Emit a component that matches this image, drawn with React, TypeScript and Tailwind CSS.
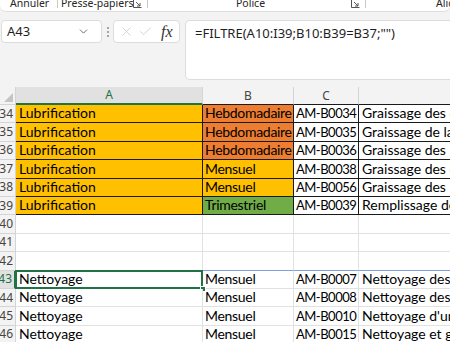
import { ChevronDown, X, Check } from "lucide-react";

type Row = {
  n: number;
  a: string;
  b: string;
  c: string;
  d: string;
  bBg?: string;
  boxed?: boolean;
};

const rows: Row[] = [
  { n: 34, a: "Lubrification", b: "Hebdomadaire", c: "AM-B0034", d: "Graissage des douilles", bBg: "bg-[#ed7d31]", boxed: true },
  { n: 35, a: "Lubrification", b: "Hebdomadaire", c: "AM-B0035", d: "Graissage de la chaîne", bBg: "bg-[#ed7d31]", boxed: true },
  { n: 36, a: "Lubrification", b: "Hebdomadaire", c: "AM-B0036", d: "Graissage des moteurs", bBg: "bg-[#ed7d31]", boxed: true },
  { n: 37, a: "Lubrification", b: "Mensuel", c: "AM-B0038", d: "Graissage des engrenages", bBg: "bg-[#ffc000]", boxed: true },
  { n: 38, a: "Lubrification", b: "Mensuel", c: "AM-B0056", d: "Graissage des paliers", bBg: "bg-[#ffc000]", boxed: true },
  { n: 39, a: "Lubrification", b: "Trimestriel", c: "AM-B0039", d: "Remplissage de l'huile", bBg: "bg-[#70ad47]", boxed: true },
  { n: 40, a: "", b: "", c: "", d: "" },
  { n: 41, a: "", b: "", c: "", d: "" },
  { n: 42, a: "", b: "", c: "", d: "" },
  { n: 43, a: "Nettoyage", b: "Mensuel", c: "AM-B0007", d: "Nettoyage des capteurs" },
  { n: 44, a: "Nettoyage", b: "Mensuel", c: "AM-B0008", d: "Nettoyage des filtres" },
  { n: 45, a: "Nettoyage", b: "Mensuel", c: "AM-B0010", d: "Nettoyage d'une pompe" },
  { n: 46, a: "Nettoyage", b: "Mensuel", c: "AM-B0015", d: "Nettoyage et graissage" },
];

const cellFont = { fontFamily: "Lato, 'Open Sans', sans-serif" };
const uiFont = { fontFamily: "'Noto Sans', 'Open Sans', sans-serif" };

function Launcher() {
  return (
    <svg width="9" height="9" viewBox="0 0 9 9" className="text-[#555]">
      <path d="M0.5 0.5v8h8" fill="none" stroke="currentColor" strokeWidth="1" />
      <path d="M3 3l4 4M7 4v3H4" fill="none" stroke="currentColor" strokeWidth="1" />
    </svg>
  );
}

function Ribbon() {
  return (
    <div
      className="h-[12px] bg-white border-b border-[#dedede] rounded-b-[6px] flex items-end overflow-hidden text-[10.5px] text-[#262626] leading-none pb-[3px] whitespace-nowrap"
      style={uiFont}
    >
      <span className="shrink-0 ml-[10px] w-[47px]">Annuler</span>
      <span className="shrink-0 w-px h-[9px] bg-[#c8c8c8]" />
      <span className="shrink-0 ml-[3px] w-[72px]">Presse-papiers</span>
      <span className="shrink-0"><Launcher /></span>
      <span className="shrink-0 ml-[5px] w-px h-[9px] bg-[#c8c8c8]" />
      <span className="shrink-0 ml-[88px] w-[115px]">Police</span>
      <span className="shrink-0"><Launcher /></span>
      <span className="shrink-0 ml-[5px] w-px h-[9px] bg-[#c8c8c8]" />
      <span className="shrink-0 ml-[70px]">Alignement</span>
    </div>
  );
}

function FormulaBar() {
  return (
    <div className="bg-[#f3f3f3] h-[75px] flex items-start pt-[8px] pl-px">
      <div
        className="shrink-0 w-[101px] h-[23px] bg-white border border-[#dcdcdc] rounded-[4px] flex items-center justify-between pl-[5px] pr-[11px] text-[13px] text-[#1f1f1f]"
        style={uiFont}
      >
        <span>A43</span>
        <ChevronDown size={13} strokeWidth={1.4} className="text-[#444]" />
      </div>
      <div className="shrink-0 w-[11px] h-[23px] flex flex-col items-center justify-center gap-[2px]">
        <span className="w-[2px] h-[2px] rounded-full bg-[#8a8a8a]" />
        <span className="w-[2px] h-[2px] rounded-full bg-[#8a8a8a]" />
        <span className="w-[2px] h-[2px] rounded-full bg-[#8a8a8a]" />
      </div>
      <div className="shrink-0 w-[67px] h-[23px] bg-white border border-[#dcdcdc] rounded-[4px] flex items-center pl-[5px] gap-[4px]">
        <X size={15} strokeWidth={1.1} className="text-[#c2c2c2]" />
        <Check size={15} strokeWidth={1.1} className="text-[#c2c2c2]" />
        <span
          className="ml-[4px] text-[16px] italic text-[#333] leading-none"
          style={{ fontFamily: "'Liberation Serif', 'DejaVu Serif', serif" }}
        >
          fx
        </span>
      </div>
      <div
        className="ml-[5px] flex-1 h-[60px] bg-white border border-r-0 border-[#dcdcdc] rounded-l-[5px] pl-[9px] pt-[3px] text-[13px] text-[#1f1f1f] whitespace-nowrap"
        style={uiFont}
      >
        =FILTRE(A10:I39;B10:B39=B37;"")
      </div>
    </div>
  );
}

function HeaderRow() {
  return (
    <div className="flex h-[18px] bg-[#f3f3f3] text-[12px] text-[#444]" style={uiFont}>
      <div className="shrink-0 w-[16px] border-r border-b border-[#d4d4d4] flex items-end justify-end p-[2px]">
        <svg width="9" height="9" viewBox="0 0 9 9">
          <polygon points="9,0 9,9 0,9" fill="#c4c4c4" />
        </svg>
      </div>
      <div className="shrink-0 w-[187px] bg-[#e1e1e1] border-r border-[#d4d4d4] border-b-2 border-b-[#217346] flex items-center justify-center text-[#217346]">
        A
      </div>
      <div className="shrink-0 w-[91px] border-r border-[#d4d4d4] border-b border-b-[#1a1a1a] flex items-center justify-center">
        B
      </div>
      <div className="shrink-0 w-[65px] border-r border-[#d4d4d4] border-b border-b-[#1a1a1a] flex items-center justify-center">
        C
      </div>
      <div className="flex-1 border-b border-b-[#1a1a1a]" />
    </div>
  );
}

function SheetRow({ row }: { row: Row }) {
  const selected = row.n === 43;
  const line = row.boxed ? "border-[#1a1a1a]" : "border-[#e1e1e1]";
  const spill = row.n === 42 ? "border-b-[#7f9fda]" : "";
  return (
    <div className="flex h-[18.4px] text-[14px] text-black leading-none whitespace-nowrap" style={cellFont}>
      <div
        className={`w-[16px] shrink-0 overflow-hidden flex items-center justify-end pr-[2px] text-[12px] border-b ${
          selected
            ? "bg-[#e1e1e1] text-[#217346] border-r-2 border-r-[#217346] border-b-[#d4d4d4]"
            : "bg-[#f3f3f3] text-[#444] border-r border-[#d4d4d4]"
        }`}
        style={uiFont}
      >
        {row.n}
      </div>
      <div
        className={`relative w-[187px] shrink-0 flex items-end pb-[2px] pl-[3px] border-r border-b ${line} ${
          row.boxed ? "bg-[#ffc000]" : "bg-white"
        }`}
      >
        {row.a}
        {selected && (
          <>
            <div className="absolute -left-px -top-px -right-px -bottom-px border-2 border-[#217346]" />
            <div className="absolute -right-[4px] -bottom-[4px] w-[6px] h-[6px] bg-[#217346] border border-white" />
          </>
        )}
      </div>
      <div
        className={`w-[91px] shrink-0 overflow-hidden flex items-end pb-[2px] pl-[2px] tracking-[-0.3px] border-r border-b ${line} ${spill} ${
          row.bBg ?? "bg-white"
        }`}
      >
        {row.b}
      </div>
      <div
        className={`w-[65px] shrink-0 overflow-hidden flex items-end pb-[2px] pl-[2px] text-[13px] tracking-[-0.5px] border-r border-b bg-white ${line} ${spill}`}
      >
        {row.c}
      </div>
      <div className={`flex-1 min-w-0 overflow-hidden flex items-end pb-[2px] pl-[3px] border-b bg-white ${line} ${spill}`}>
        {row.d}
      </div>
    </div>
  );
}

export default function App() {
  return (
    <div className="w-[450px] h-[342px] overflow-hidden bg-[#f3f3f3]">
      <Ribbon />
      <FormulaBar />
      <HeaderRow />
      {rows.map((row) => (
        <SheetRow key={row.n} row={row} />
      ))}
    </div>
  );
}
